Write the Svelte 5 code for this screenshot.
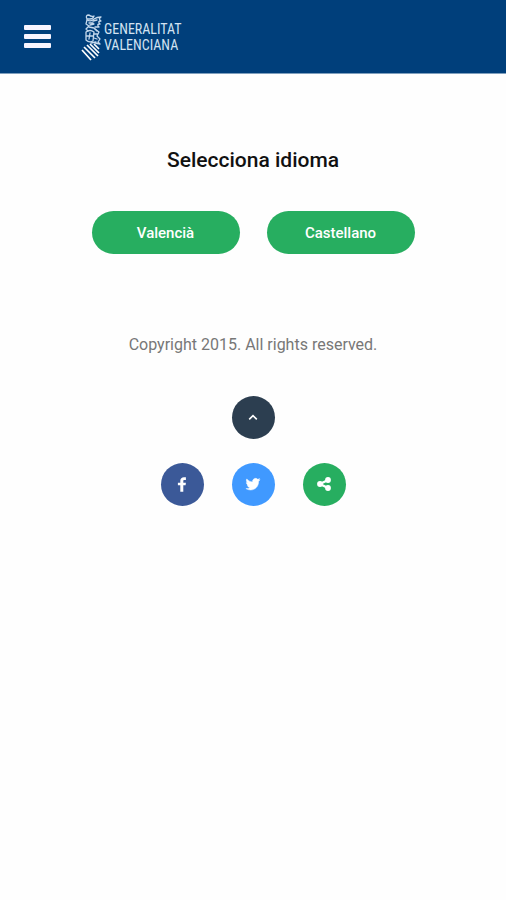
<script lang="ts">
  const languages = [
    { code: "ca", label: "Valencià" },
    { code: "es", label: "Castellano" },
  ];

  let selected = $state("");

  function toTop() {
    window.scrollTo({ top: 0, behavior: "smooth" });
  }
</script>

<header>
  <button class="menu" aria-label="Menu">
    <span></span>
    <span></span>
    <span></span>
  </button>
  <a class="brand" href="#home" aria-label="Generalitat Valenciana">
    <svg class="crest" viewBox="0 0 22 50" aria-hidden="true">
      <g fill="none" stroke="#c3d8ec" stroke-width="1.3" stroke-linecap="round" stroke-linejoin="round">
        <path d="M6 7 Q4 3 8 3 Q10 5 13 4 Q12 7 9 7 Z" />
        <path d="M6 8 Q10 10 13 7 Q16 5 20 5 Q17 7 20 9 Q16 9 19 12 Q15 12 18 15 L14 15" />
        <path d="M6 8 L5 12 L8 14 L5 17 L7 19 M8 11 H12 M9 13 L13 12 M12 9 L16 8 M8 15 L13 16 L16 19" />
        <path d="M5 20 L5 28 Q8 31 12 29 L13 20 Q9 17 5 20 Z M9 21 L8 27 M5 24 H12" />
        <path d="M14 17 L18 20 L16 24 L19 27 L17 30 L19 32 L14 31 M13 22 L16 22 M13 26 L16 27 M10 31 L15 30" />
      </g>
      <path
        d="M1 38 L10 48 M3 35 L14 46 M6 33 L17 44 M9 32 L18 41 M13 32 L18 37"
        fill="none"
        stroke="#fff"
        stroke-width="1.7"
      />
    </svg>
    <span class="name">
      <span>GENERALITAT</span>
      <span>VALENCIANA</span>
    </span>
  </a>
</header>

<main>
  <h1>Selecciona idioma</h1>
  <div class="languages">
    {#each languages as lang}
      <button lang={lang.code} aria-pressed={selected === lang.code} onclick={() => (selected = lang.code)}>
        {lang.label}
      </button>
    {/each}
  </div>
</main>

<footer>
  <p>Copyright 2015. All rights reserved.</p>
  <button class="round top" aria-label="Back to top" onclick={toTop}>
    <svg viewBox="0 0 16 16" aria-hidden="true">
      <path d="M4.2 9.4 L8 5.7 L11.8 9.4" fill="none" stroke="currentColor" stroke-width="1.6" />
    </svg>
  </button>
  <nav aria-label="Social">
    <a class="round facebook" href="#facebook" aria-label="Facebook">
      <svg viewBox="0 0 16 16" aria-hidden="true">
        <path
          d="M11.9 0.3 V2.9 H10.5 C9.4 2.9 9.3 3.4 9.3 4.1 V5.7 H11.9 L11.6 8.3 H9.3 V14.8 H6.3 V8.3 H3.9 V5.7 H6.3 V3.8 C6.3 1.5 7.9 0.2 9.9 0.2 C10.8 0.2 11.6 0.3 11.9 0.3 Z"
        />
      </svg>
    </a>
    <a class="round twitter" href="#twitter" aria-label="Twitter">
      <svg viewBox="0 0 16 16" aria-hidden="true">
        <path
          d="M15 2.7 c-.5.2-1.1.4-1.7.5 .6-.4 1-1 1.2-1.6 -.5.3-1.1.6-1.8.7 A2.9 2.9 0 0 0 7.7 4.9 C5.3 4.8 3.2 3.7 1.8 1.9 c-.8 1.3-.4 3 .9 3.9 -.5 0-.9-.1-1.3-.4 0 1.4 1 2.7 2.3 2.9 -.4.1-.9.1-1.3.1 .4 1.1 1.4 2 2.7 2 A5.8 5.8 0 0 1 .9 11.6 c5.7 3.5 12.7-.1 12.7-7 v-.4 c.6-.4 1-.9 1.4-1.5 Z"
          stroke="currentColor"
          stroke-width="0.5"
        />
      </svg>
    </a>
    <a class="round share" href="#share" aria-label="Share">
      <svg viewBox="0 0 16 16" aria-hidden="true">
        <path d="M12 3 L4 7 L12 11" fill="none" stroke="currentColor" stroke-width="2.3" />
        <circle cx="12" cy="3" r="2.9" />
        <circle cx="4" cy="7" r="2.9" />
        <circle cx="12" cy="11" r="2.9" />
      </svg>
    </a>
  </nav>
</footer>

<style>
  :global(body) {
    margin: 0;
    background: #fefefe;
    font-family: Roboto, "Liberation Sans", sans-serif;
  }
  button {
    border: none;
    padding: 0;
    font-family: inherit;
    cursor: pointer;
  }
  header {
    display: flex;
    align-items: center;
    gap: 30px;
    height: 73px;
    padding: 0 24px;
    border-bottom: 1px solid #7f9fbd;
    background: #003f7b;
    background-clip: padding-box;
  }
  .menu {
    display: flex;
    flex-direction: column;
    gap: 4px;
    width: 27px;
    background: none;
  }
  .menu span {
    height: 5px;
    border-radius: 1px;
    background: #f8f5ff;
  }
  .brand {
    display: flex;
    align-items: center;
    gap: 1px;
    color: #d3e3f2;
    text-decoration: none;
  }
  .crest {
    width: 22px;
    height: 50px;
  }
  .name {
    display: flex;
    flex-direction: column;
    font-family: "Liberation Sans Narrow", "Roboto Condensed", "Open Sans Condensed", sans-serif;
    font-size: 14px;
    line-height: 16px;
  }
  main,
  footer {
    display: flex;
    flex-direction: column;
    align-items: center;
    padding: 0 16px;
  }
  h1 {
    margin: 72px 0 36px;
    font-size: 21px;
    font-weight: 500;
    line-height: 29px;
    color: #111;
  }
  .languages {
    display: flex;
    flex-wrap: wrap;
    justify-content: center;
    gap: 27px;
  }
  .languages button {
    width: 148px;
    height: 43px;
    border-radius: 22px;
    background: #27ae60;
    color: #fff;
    font-size: 15px;
    font-weight: 500;
  }
  p {
    margin: 80px 0 40px;
    font-size: 16px;
    line-height: 22px;
    color: #777;
  }
  nav {
    display: flex;
    gap: 28px;
    margin-top: 24px;
  }
  .round {
    display: flex;
    align-items: center;
    justify-content: center;
    width: 43px;
    height: 43px;
    border-radius: 50%;
    color: #fff;
  }
  .round svg {
    width: 16px;
    height: 16px;
    fill: currentColor;
  }
  .top {
    background: #2c3e50;
  }
  .facebook {
    background: #3b5998;
  }
  .twitter {
    background: #4099ff;
  }
  .share {
    background: #27ae60;
  }
</style>
